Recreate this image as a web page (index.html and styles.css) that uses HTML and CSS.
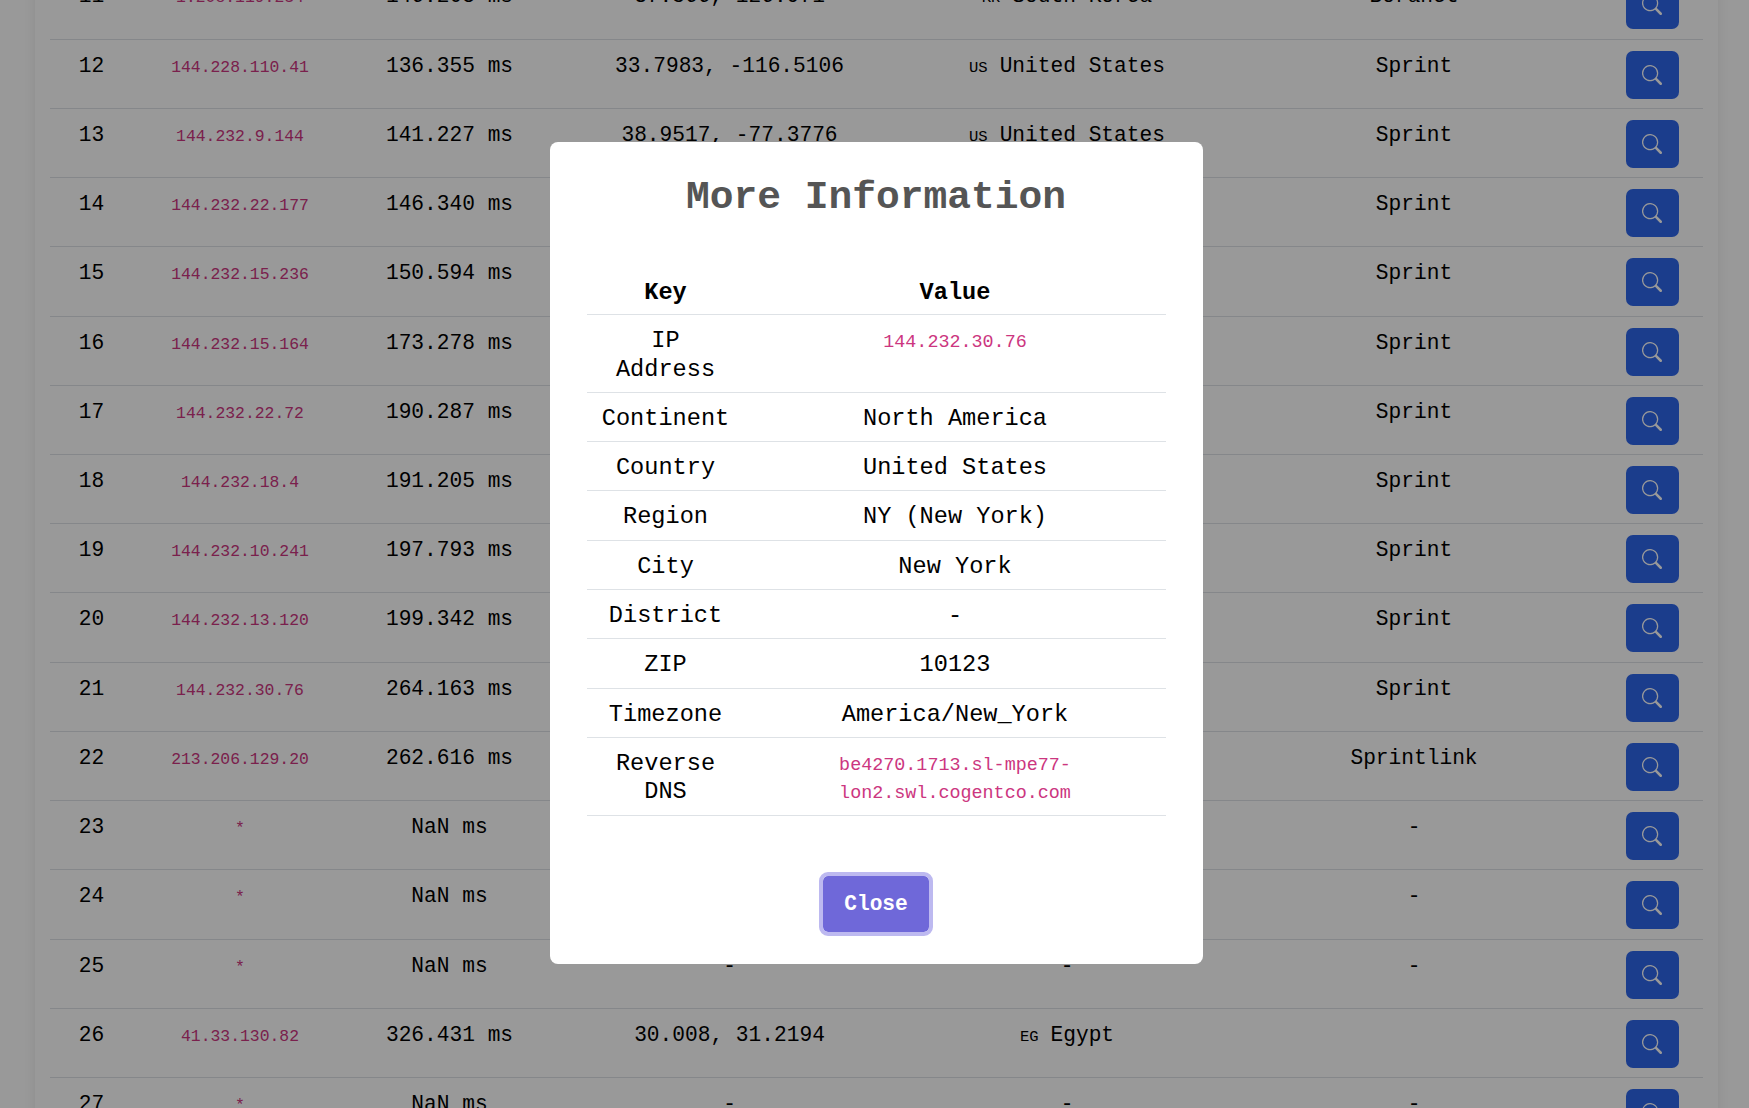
FILE: index.html
```html
<!DOCTYPE html>
<html>
<head>
    <meta charset="UTF-8">
    <title>Traceroute</title>
    <link rel="stylesheet" href="styles.css">
</head>
<body>
    <svg class="defs" width="0" height="0">
        <symbol id="search" viewBox="0 0 16 16">
            <path d="M11.742 10.344a6.5 6.5 0 1 0-1.397 1.398h-.001c.03.04.062.078.098.115l3.85 3.85a1 1 0 0 0 1.415-1.414l-3.85-3.85a1.007 1.007 0 0 0-.115-.1zM12 6.5a5.5 5.5 0 1 1-11 0 5.5 5.5 0 0 1 11 0z"/>
        </symbol>
    </svg>
    <div class="panel">
        <table class="hops">
            <colgroup>
                <col class="c-num"><col class="c-ip"><col class="c-time"><col class="c-loc"><col class="c-country"><col class="c-isp"><col class="c-btn">
            </colgroup>
            <tbody>
                <tr><td>11</td><td><code>1.208.119.234</code></td><td>146.208 ms</td><td>37.566, 126.971</td><td><span class="flag">KR</span>South Korea</td><td>Boranet</td><td><button class="info"><svg><use href="#search"/></svg></button></td></tr>
                <tr><td>12</td><td><code>144.228.110.41</code></td><td>136.355 ms</td><td>33.7983, -116.5106</td><td><span class="flag">US</span>United States</td><td>Sprint</td><td><button class="info"><svg><use href="#search"/></svg></button></td></tr>
                <tr><td>13</td><td><code>144.232.9.144</code></td><td>141.227 ms</td><td>38.9517, -77.3776</td><td><span class="flag">US</span>United States</td><td>Sprint</td><td><button class="info"><svg><use href="#search"/></svg></button></td></tr>
                <tr><td>14</td><td><code>144.232.22.177</code></td><td>146.340 ms</td><td></td><td></td><td>Sprint</td><td><button class="info"><svg><use href="#search"/></svg></button></td></tr>
                <tr><td>15</td><td><code>144.232.15.236</code></td><td>150.594 ms</td><td></td><td></td><td>Sprint</td><td><button class="info"><svg><use href="#search"/></svg></button></td></tr>
                <tr><td>16</td><td><code>144.232.15.164</code></td><td>173.278 ms</td><td></td><td></td><td>Sprint</td><td><button class="info"><svg><use href="#search"/></svg></button></td></tr>
                <tr><td>17</td><td><code>144.232.22.72</code></td><td>190.287 ms</td><td></td><td></td><td>Sprint</td><td><button class="info"><svg><use href="#search"/></svg></button></td></tr>
                <tr><td>18</td><td><code>144.232.18.4</code></td><td>191.205 ms</td><td></td><td></td><td>Sprint</td><td><button class="info"><svg><use href="#search"/></svg></button></td></tr>
                <tr><td>19</td><td><code>144.232.10.241</code></td><td>197.793 ms</td><td></td><td></td><td>Sprint</td><td><button class="info"><svg><use href="#search"/></svg></button></td></tr>
                <tr><td>20</td><td><code>144.232.13.120</code></td><td>199.342 ms</td><td></td><td></td><td>Sprint</td><td><button class="info"><svg><use href="#search"/></svg></button></td></tr>
                <tr><td>21</td><td><code>144.232.30.76</code></td><td>264.163 ms</td><td></td><td></td><td>Sprint</td><td><button class="info"><svg><use href="#search"/></svg></button></td></tr>
                <tr><td>22</td><td><code>213.206.129.20</code></td><td>262.616 ms</td><td></td><td></td><td>Sprintlink</td><td><button class="info"><svg><use href="#search"/></svg></button></td></tr>
                <tr><td>23</td><td><code>*</code></td><td>NaN ms</td><td>-</td><td>-</td><td>-</td><td><button class="info"><svg><use href="#search"/></svg></button></td></tr>
                <tr><td>24</td><td><code>*</code></td><td>NaN ms</td><td>-</td><td>-</td><td>-</td><td><button class="info"><svg><use href="#search"/></svg></button></td></tr>
                <tr><td>25</td><td><code>*</code></td><td>NaN ms</td><td>-</td><td>-</td><td>-</td><td><button class="info"><svg><use href="#search"/></svg></button></td></tr>
                <tr><td>26</td><td><code>41.33.130.82</code></td><td>326.431 ms</td><td>30.008, 31.2194</td><td><span class="flag">EG</span>Egypt</td><td></td><td><button class="info"><svg><use href="#search"/></svg></button></td></tr>
                <tr><td>27</td><td><code>*</code></td><td>NaN ms</td><td>-</td><td>-</td><td>-</td><td><button class="info"><svg><use href="#search"/></svg></button></td></tr>
            </tbody>
        </table>
    </div>

    <div class="overlay">
        <div class="modal">
            <h2 class="modal-title">More Information</h2>
            <table class="details">
                <thead>
                    <tr><th>Key</th><th>Value</th></tr>
                </thead>
                <tbody>
                    <tr><td>IP Address</td><td><code>144.232.30.76</code></td></tr>
                    <tr><td>Continent</td><td>North America</td></tr>
                    <tr><td>Country</td><td>United States</td></tr>
                    <tr><td>Region</td><td>NY (New York)</td></tr>
                    <tr><td>City</td><td>New York</td></tr>
                    <tr><td>District</td><td>-</td></tr>
                    <tr><td>ZIP</td><td>10123</td></tr>
                    <tr><td>Timezone</td><td>America/New_York</td></tr>
                    <tr><td>Reverse DNS</td><td><code>be4270.1713.sl-mpe77-lon2.swl.cogentco.com</code></td></tr>
                </tbody>
            </table>
            <button class="close">Close</button>
        </div>
    </div>
</body>
</html>
```
FILE: styles.css
```css
html, body {
    height: 100%;
}
body {
    margin: 0;
    overflow: hidden;
    background: #fff;
    color: #000;
    font-family: "Liberation Mono", monospace;
}
.defs {
    display: block;
    height: 0;
}
code {
    font-family: "Liberation Mono", monospace;
    line-height: 1;
    color: #cc3680;
}

/* page behind the dialog, scrolled down past row 10 */
.panel {
    width: 1653px;
    margin: -30px 0 0 35px;
    padding: 0 15px;
    background: #fff;
    box-shadow: 0 0 12px rgba(0, 0, 0, 0.08);
}
.hops {
    width: 100%;
    table-layout: fixed;
    border-collapse: collapse;
    font-size: 21.2px;
    line-height: 28px;
}
.c-num { width: 83px; }
.c-ip { width: 214px; }
.c-time { width: 205px; }
.c-loc { width: 355px; }
.c-country { width: 320px; }
.c-isp { width: 374px; }
.c-btn { width: 102px; }
.hops td {
    height: 69.23px;
    padding: 12px 0 0;
    box-sizing: border-box;
    border-bottom: 1px solid #dee2e6;
    text-align: center;
    vertical-align: top;
}
.hops code {
    font-size: 16.4px;
}
.flag {
    margin-right: 12px;
    font-size: 15.5px;
}
.info {
    display: inline-flex;
    align-items: center;
    justify-content: center;
    width: 53px;
    height: 48px;
    margin-top: -1px;
    padding: 0;
    border: none;
    border-radius: 7px;
    background: #2e66ea;
    vertical-align: top;
}
.info svg {
    width: 20px;
    height: 20px;
    fill: #fff;
}

/* dialog */
.overlay {
    position: fixed;
    inset: 0;
    display: flex;
    align-items: center;
    justify-content: center;
    background: rgba(0, 0, 0, 0.4);
}
.modal {
    display: flex;
    flex-direction: column;
    align-items: center;
    box-sizing: border-box;
    width: 653px;
    margin: 0 0 2px 3px;
    padding: 0 37px 28px;
    background: #fff;
    border-radius: 8px;
}
.modal-title {
    margin: 30px 0 43.5px;
    color: #555;
    font-size: 39.6px;
    line-height: 52px;
    font-weight: bold;
}
.details {
    width: 100%;
    table-layout: fixed;
    border-collapse: collapse;
    font-size: 23.6px;
    line-height: 28.3px;
}
.details th:first-child {
    box-sizing: border-box;
    width: 158px;
}
.details th,
.details td {
    padding: 12px 10px 8px;
    border-bottom: 1px solid #dee2e6;
    text-align: center;
    vertical-align: top;
}
.details th {
    padding: 11px 10px 7px;
}
.details code {
    font-size: 18.4px;
}
.close {
    width: 114px;
    height: 64px;
    margin-top: 56px;
    border: 4px solid #bdb9f0;
    border-radius: 9px;
    background: #6f68d9;
    background-clip: padding-box;
    color: #fff;
    font-family: "Liberation Mono", monospace;
    font-size: 21.2px;
    font-weight: bold;
}
```
